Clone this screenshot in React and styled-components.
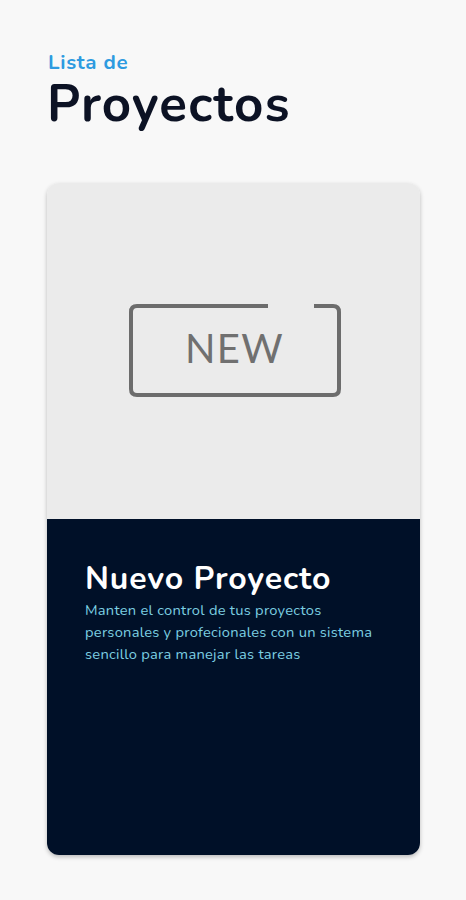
import React from "react";
import styled, { createGlobalStyle } from "styled-components";

const Global = createGlobalStyle`
  html, body { margin: 0; padding: 0; background: #f8f8f8; }
  body { font-family: "Nunito", "Lato", "Open Sans", sans-serif; }
`;

const Page = styled.div`
  width: 466px;
  min-height: 900px;
  box-sizing: border-box;
  padding: 51px 46px 0 47px;
  display: flex;
  flex-direction: column;
`;

const Header = styled.header`
  display: flex;
  flex-direction: column;
  gap: 3px;
`;

const Kicker = styled.div`
  color: #2e9be0;
  font-size: 20.5px;
  font-weight: 700;
  line-height: 23px;
  letter-spacing: 0.7px;
  padding-left: 1px;
`;

const Title = styled.h1`
  margin: 0;
  color: #0c1224;
  font-size: 51px;
  font-weight: 700;
  line-height: 54px;
  letter-spacing: 1.2px;
`;

const Card = styled.div`
  margin-top: 52px;
  height: 672px;
  border-radius: 12px;
  overflow: hidden;
  display: flex;
  flex-direction: column;
  box-shadow: 0 2px 4px rgba(0, 0, 0, 0.25);
`;

const Cover = styled.div`
  height: 336px;
  background: #ebebeb;
  display: flex;
  align-items: center;
  justify-content: center;
  padding-left: 2px;
`;

const NewBadge = styled.div`
  position: relative;
  width: 212px;
  height: 93px;
  display: flex;
  align-items: center;
  justify-content: center;
  margin-top: -2px;
`;

const BadgeFrame = styled.svg`
  position: absolute;
  inset: 0;
`;

const BadgeText = styled.span`
  position: relative;
  top: -2px;
  font-family: "Lato", "Open Sans", sans-serif;
  font-size: 40px;
  font-weight: 400;
  color: #707070;
  letter-spacing: 1.3px;
`;

const Body = styled.div`
  flex: 1;
  background: #001028;
  padding: 41px 38px 0 38px;
  display: flex;
  flex-direction: column;
`;

const CardTitle = styled.h2`
  margin: 0;
  color: #ffffff;
  font-size: 32px;
  font-weight: 700;
  line-height: 38px;
  letter-spacing: 0.9px;
`;

const CardText = styled.p`
  margin: 1px 0 0;
  color: #7ccfe2;
  font-size: 14.7px;
  line-height: 22px;
  font-weight: 400;
  letter-spacing: 0.25px;
`;

function BadgeSvg() {
  return (
    <BadgeFrame width="212" height="93" viewBox="0 0 212 93">
      <path
        d="M139 2 H8 Q2 2 2 8 V85 Q2 91 8 91 H204 Q210 91 210 85 V8 Q210 2 204 2 H185"
        fill="none"
        stroke="#6c6c6c"
        strokeWidth="4"
      />
    </BadgeFrame>
  );
}

export default function App() {
  return (
    <>
      <Global />
      <Page>
        <Header>
          <Kicker>Lista de</Kicker>
          <Title>Proyectos</Title>
        </Header>
        <Card>
          <Cover>
            <NewBadge>
              <BadgeSvg />
              <BadgeText>NEW</BadgeText>
            </NewBadge>
          </Cover>
          <Body>
            <CardTitle>Nuevo Proyecto</CardTitle>
            <CardText>
              Manten el control de tus proyectos personales y profecionales con
              un sistema sencillo para manejar las tareas
            </CardText>
          </Body>
        </Card>
      </Page>
    </>
  );
}
